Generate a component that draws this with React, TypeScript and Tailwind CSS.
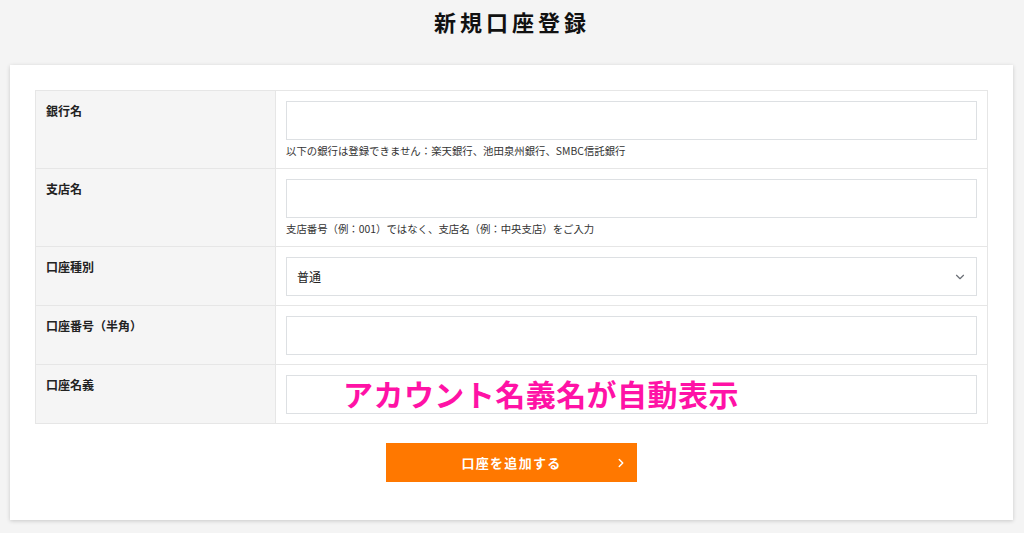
import React from "react";
import { ChevronDown, ChevronRight } from "lucide-react";

const font = { fontFamily: '"Noto Sans CJK JP", "Noto Sans", sans-serif' };

function Label({ children }: { children: React.ReactNode }) {
  return (
    <td className="w-[240px] border border-[#e6e6e6] bg-[#f5f5f5] px-[10px] pt-[11px] align-top text-[12px] font-bold leading-[18px] text-[#222]">
      {children}
    </td>
  );
}

function Field({ children }: { children: React.ReactNode }) {
  return (
    <td className="border border-[#e6e6e6] px-[10px] pt-[10px] pb-[9px] align-top">
      {children}
    </td>
  );
}

function TextBox() {
  return <div className="h-[39px] w-full border border-[#dde0e3] bg-white" />;
}

function Help({ children }: { children: React.ReactNode }) {
  return <p className="mt-[3px] text-[10.4px] leading-[16px] text-[#333]">{children}</p>;
}

export default function App() {
  return (
    <div className="min-h-[533px] bg-[#f4f4f4] pb-[13px]" style={font}>
      <h1 className="pt-[6px] text-center text-[22px] font-bold leading-[30px] tracking-[0.18em] text-[#111]">
        新規口座登録
      </h1>

      <div className="mt-[29px] ml-[10px] w-[1003px] bg-white px-[25px] pt-[25px] pb-[38px] shadow-[0_1px_4px_rgba(0,0,0,0.18)]">
        <table className="w-full border-collapse">
          <tbody>
            <tr>
              <Label>銀行名</Label>
              <Field>
                <TextBox />
                <Help>以下の銀行は登録できません：楽天銀行、池田泉州銀行、SMBC信託銀行</Help>
              </Field>
            </tr>
            <tr>
              <Label>支店名</Label>
              <Field>
                <TextBox />
                <Help>支店番号（例：001）ではなく、支店名（例：中央支店）をご入力</Help>
              </Field>
            </tr>
            <tr>
              <Label>口座種別</Label>
              <Field>
                <div className="flex h-[39px] w-full items-center justify-between border border-[#dde0e3] bg-white pl-[10px] pr-[9px]">
                  <span className="text-[12px] text-[#222]">普通</span>
                  <ChevronDown size={14} strokeWidth={2} className="text-[#6b6f76]" />
                </div>
              </Field>
            </tr>
            <tr>
              <Label>口座番号（半角）</Label>
              <Field>
                <TextBox />
              </Field>
            </tr>
            <tr>
              <Label>口座名義</Label>
              <Field>
                <div className="relative">
                  <TextBox />
                  <span className="absolute left-[57px] top-[0px] text-[30px] font-bold leading-[36px] tracking-[0.015em] text-[#ff12a6]">
                    アカウント名義名が自動表示
                  </span>
                </div>
              </Field>
            </tr>
          </tbody>
        </table>

        <div className="mt-[19px] flex justify-center">
          <button className="relative flex h-[39px] w-[251px] items-center justify-center bg-[#ff7800] text-[13px] font-bold tracking-[0.1em] text-white">
            口座を追加する
            <ChevronRight size={14} strokeWidth={2.5} className="absolute right-[9px] top-[13px]" />
          </button>
        </div>
      </div>
    </div>
  );
}
